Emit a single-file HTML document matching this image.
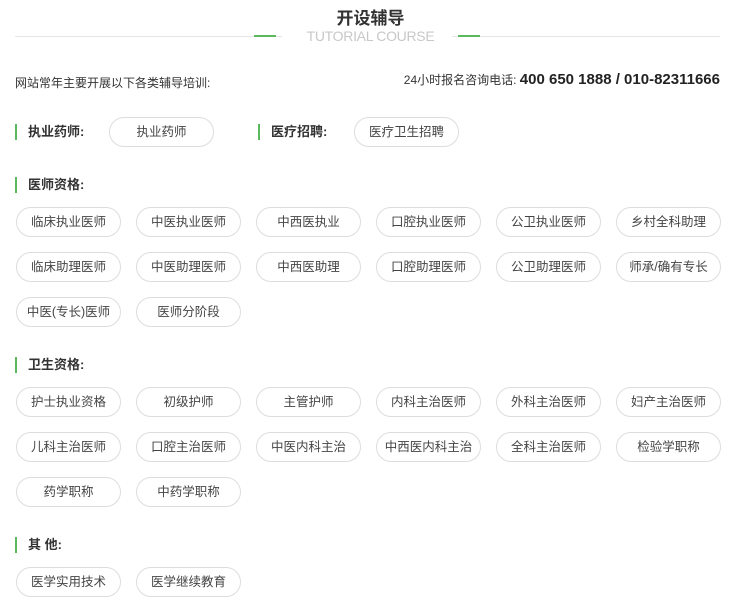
<!DOCTYPE html>
<html><head><meta charset="utf-8"><style>
*{margin:0;padding:0;box-sizing:border-box}
body{width:741px;height:606px;background:#fff;font-family:"Liberation Sans","Noto Sans CJK SC",sans-serif;color:#333;position:relative;overflow:hidden}
.a{position:absolute}
.t{left:0;width:741px;text-align:center;top:4px;font-size:17px;font-weight:bold;color:#333}
.line{top:36px;height:1px;background:#e6e6e6}
.g{top:35px;height:2px;background:#5cb85c}
.sub{left:0;width:741px;text-align:center;top:28px;font-size:14px;color:#c8c8c8;letter-spacing:-0.3px}
.intro{left:15px;top:74px;font-size:12px;color:#333}
.ph{right:21px;top:71px;font-size:12px;color:#333}
.ph b{font-size:15px;color:#222}
.lab{font-size:13px;font-weight:bold;color:#333;padding-left:11px;height:16px;line-height:16px;border-left:2px solid #5cb85c}
.p{width:105px;height:30px;border:1px solid #ddd;border-radius:15px;text-align:center;line-height:28px;font-size:12.5px;color:#444;background:#fff}
</style></head><body>
<div class="a t">开设辅导</div>
<div class="a line" style="left:15px;width:705px"></div>
<div class="a g" style="left:254px;width:22px"></div>
<div class="a g" style="left:458px;width:22px"></div>
<div class="a" style="left:282px;width:170px;top:26px;height:20px;background:#fff"></div>
<div class="a sub">TUTORIAL COURSE</div>
<div class="a intro">网站常年主要开展以下各类辅导培训:</div>
<div class="a ph">24小时报名咨询电话: <b>400 650 1888 / 010-82311666</b></div>

<div class="a lab" style="left:15px;top:124px">执业药师:</div>
<div class="a p" style="left:109px;top:117px">执业药师</div>
<div class="a lab" style="left:258px;top:124px">医疗招聘:</div>
<div class="a p" style="left:354px;top:117px">医疗卫生招聘</div>

<div class="a lab" style="left:15px;top:177px">医师资格:</div>
<div class="a p" style="left:16px;top:207px">临床执业医师</div>
<div class="a p" style="left:136px;top:207px">中医执业医师</div>
<div class="a p" style="left:256px;top:207px">中西医执业</div>
<div class="a p" style="left:376px;top:207px">口腔执业医师</div>
<div class="a p" style="left:496px;top:207px">公卫执业医师</div>
<div class="a p" style="left:616px;top:207px">乡村全科助理</div>
<div class="a p" style="left:16px;top:252px">临床助理医师</div>
<div class="a p" style="left:136px;top:252px">中医助理医师</div>
<div class="a p" style="left:256px;top:252px">中西医助理</div>
<div class="a p" style="left:376px;top:252px">口腔助理医师</div>
<div class="a p" style="left:496px;top:252px">公卫助理医师</div>
<div class="a p" style="left:616px;top:252px">师承/确有专长</div>
<div class="a p" style="left:16px;top:297px">中医(专长)医师</div>
<div class="a p" style="left:136px;top:297px">医师分阶段</div>

<div class="a lab" style="left:15px;top:357px">卫生资格:</div>
<div class="a p" style="left:16px;top:387px">护士执业资格</div>
<div class="a p" style="left:136px;top:387px">初级护师</div>
<div class="a p" style="left:256px;top:387px">主管护师</div>
<div class="a p" style="left:376px;top:387px">内科主治医师</div>
<div class="a p" style="left:496px;top:387px">外科主治医师</div>
<div class="a p" style="left:616px;top:387px">妇产主治医师</div>
<div class="a p" style="left:16px;top:432px">儿科主治医师</div>
<div class="a p" style="left:136px;top:432px">口腔主治医师</div>
<div class="a p" style="left:256px;top:432px">中医内科主治</div>
<div class="a p" style="left:376px;top:432px">中西医内科主治</div>
<div class="a p" style="left:496px;top:432px">全科主治医师</div>
<div class="a p" style="left:616px;top:432px">检验学职称</div>
<div class="a p" style="left:16px;top:477px">药学职称</div>
<div class="a p" style="left:136px;top:477px">中药学职称</div>

<div class="a lab" style="left:15px;top:537px">其 他:</div>
<div class="a p" style="left:16px;top:567px">医学实用技术</div>
<div class="a p" style="left:136px;top:567px">医学继续教育</div>
</body></html>
